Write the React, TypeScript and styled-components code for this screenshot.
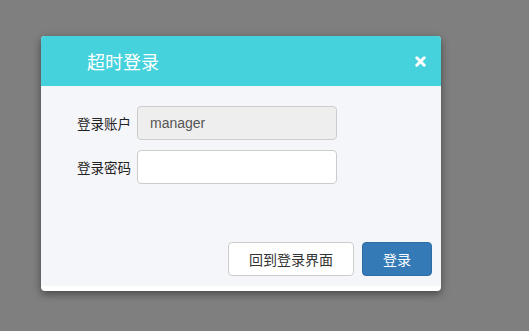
import React from "react";
import styled, { createGlobalStyle } from "styled-components";

const Global = createGlobalStyle`
  html, body { margin: 0; padding: 0; }
  body {
    background: #7f7f7f;
    font-family: "Liberation Sans", "Noto Sans CJK SC", sans-serif;
  }
`;

const Page = styled.div`
  width: 529px;
  height: 331px;
  box-sizing: border-box;
  padding: 36px 0 0 41px;
  overflow: hidden;
`;

const Dialog = styled.div`
  width: 400px;
  background: #ffffff;
  border-radius: 4px;
  overflow: hidden;
  box-shadow: 0 3px 9px rgba(0, 0, 0, 0.45);
  padding-bottom: 5px;
`;

const Header = styled.div`
  height: 50px;
  background: #46d2dc;
  display: flex;
  align-items: center;
  justify-content: space-between;
  padding: 0 15px 0 46px;
  box-sizing: border-box;
`;

const Title = styled.h4`
  margin: 0;
  color: #ffffff;
  font-size: 18px;
  font-weight: 400;
  font-family: "Noto Sans CJK SC", sans-serif;
`;

const Close = styled.button`
  border: none;
  background: none;
  padding: 0;
  display: flex;
  align-items: center;
  cursor: pointer;
`;

const Body = styled.div`
  background: #f5f6fa;
  padding: 20px 0 10px 0;
  display: flex;
  flex-direction: column;
`;

const Form = styled.div`
  display: flex;
  flex-direction: column;
  gap: 10px;
`;

const Row = styled.div`
  display: flex;
  align-items: center;
  gap: 6px;
`;

const Label = styled.label`
  width: 90px;
  text-align: right;
  font-size: 13.5px;
  color: #222;
  font-family: "Noto Sans CJK SC", sans-serif;
`;

const Input = styled.input<{ $readonly?: boolean }>`
  width: 200px;
  height: 34px;
  box-sizing: border-box;
  border: 1px solid #cccccc;
  border-radius: 4px;
  padding: 0 12px;
  font-size: 14px;
  color: #555555;
  font-family: "Liberation Sans", Arial, sans-serif;
  background: ${(p) => (p.$readonly ? "#eeeeee" : "#ffffff")};
  outline: none;
`;

const Footer = styled.div`
  display: flex;
  justify-content: flex-end;
  gap: 8px;
  padding: 0 9px 0 0;
  margin-top: 58px;
`;

const Button = styled.button<{ $primary?: boolean }>`
  height: 34px;
  box-sizing: border-box;
  padding: 0 20px;
  border-radius: 4px;
  font-size: 14px;
  font-family: "Noto Sans CJK SC", sans-serif;
  border: 1px solid ${(p) => (p.$primary ? "#2e6da4" : "#cccccc")};
  background: ${(p) => (p.$primary ? "#337ab7" : "#ffffff")};
  color: ${(p) => (p.$primary ? "#ffffff" : "#333333")};
  cursor: pointer;
`;

export default function App() {
  return (
    <>
      <Global />
      <Page>
        <Dialog>
          <Header>
            <Title>超时登录</Title>
            <Close aria-label="close">
              <svg width="11" height="11" viewBox="0 0 11 11">
                <path d="M1.8 1.8 L9.2 9.2 M9.2 1.8 L1.8 9.2" stroke="#fff" strokeWidth="3" strokeLinecap="round" />
              </svg>
            </Close>
          </Header>
          <Body>
            <Form>
              <Row>
                <Label>登录账户</Label>
                <Input $readonly readOnly value="manager" />
              </Row>
              <Row>
                <Label>登录密码</Label>
                <Input type="password" />
              </Row>
            </Form>
            <Footer>
              <Button>回到登录界面</Button>
              <Button $primary>登录</Button>
            </Footer>
          </Body>
        </Dialog>
      </Page>
    </>
  );
}
